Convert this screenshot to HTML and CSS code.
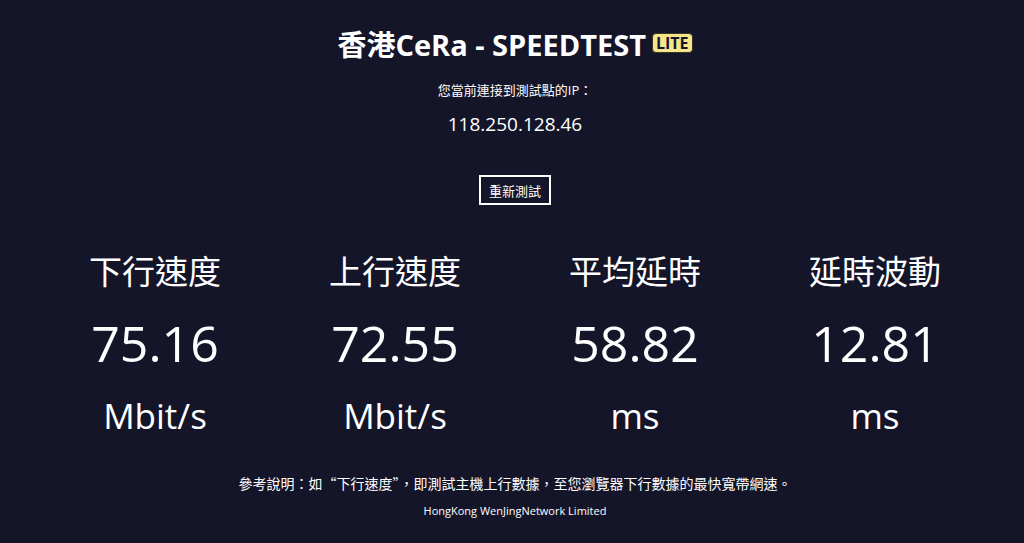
FILE: index.html
```html
<!DOCTYPE html>
<html lang="zh-Hant">
<head>
    <meta charset="UTF-8">
    <meta name="viewport" content="width=device-width, initial-scale=1.0">
    <title>香港CeRa - SPEEDTEST</title>
    <link rel="stylesheet" href="styles.css">
</head>
<body>
    <div class="page">
        <h1 class="title">香港CeRa - SPEEDTEST <span class="badge">LITE</span></h1>
        <p class="ip-label">您當前連接到測試點的IP：</p>
        <p class="ip">118.250.128.46</p>

        <button class="retest">重新測試</button>

        <div class="stats">
            <div class="stat">
                <div class="stat-name">下行速度</div>
                <div class="stat-value">75.16</div>
                <div class="stat-unit">Mbit/s</div>
            </div>
            <div class="stat">
                <div class="stat-name">上行速度</div>
                <div class="stat-value">72.55</div>
                <div class="stat-unit">Mbit/s</div>
            </div>
            <div class="stat">
                <div class="stat-name">平均延時</div>
                <div class="stat-value">58.82</div>
                <div class="stat-unit">ms</div>
            </div>
            <div class="stat">
                <div class="stat-name">延時波動</div>
                <div class="stat-value">12.81</div>
                <div class="stat-unit">ms</div>
            </div>
        </div>

        <p class="note">參考說明：如“下行速度”，即測試主機上行數據，至您瀏覽器下行數據的最快寬帶網速。</p>
        <p class="company">HongKong WenJingNetwork Limited</p>
    </div>
</body>
</html>
```

FILE: styles.css
```css
body {
    margin: 0;
    background-color: #15152a;
    color: #fff;
    font-family: "Open Sans", "Noto Sans CJK TC", sans-serif;
}

.page {
    display: flex;
    flex-direction: column;
    align-items: center;
    padding-left: 6px;
    padding-top: 28px;
    text-align: center;
}

.title {
    display: flex;
    align-items: center;
    gap: 6px;
    margin: 0;
    font-size: 29px;
    line-height: 34px;
    font-weight: 700;
}

.badge {
    display: inline-block;
    margin-top: -4px;
    background-color: #f5e68c;
    color: #15152a;
    border: 1px solid #3a3420;
    border-radius: 4px;
    padding: 0 3px;
    font-size: 16px;
    line-height: 18px;
    font-weight: 700;
}

.ip-label {
    margin: 18px 0 0;
    font-size: 13px;
    line-height: 20px;
}

.ip {
    margin: 14px 0 0;
    font-size: 19px;
    line-height: 20px;
}

.retest {
    margin-top: 41px;
    width: 72px;
    height: 30px;
    background: transparent;
    color: #fff;
    border: 2px solid #fff;
    font-family: inherit;
    font-size: 13px;
    padding: 0;
    cursor: pointer;
}

.stats {
    display: grid;
    grid-template-columns: repeat(4, 240px);
    margin-top: 45px;
}

.stat {
    display: flex;
    flex-direction: column;
    align-items: center;
}

.stat-name {
    font-size: 33px;
    line-height: 44px;
}

.stat-value {
    margin-top: 19px;
    font-size: 50px;
    line-height: 60px;
}

.stat-unit {
    margin-top: 21px;
    font-size: 35px;
    line-height: 44px;
}

.note {
    margin: 35px 0 0;
    font-family: "Noto Sans CJK TC", sans-serif;
    font-feature-settings: "fwid";
    font-size: 14px;
    line-height: 20px;
}

.company {
    margin: 10px 0 0;
    font-size: 11px;
    line-height: 16px;
}
```
